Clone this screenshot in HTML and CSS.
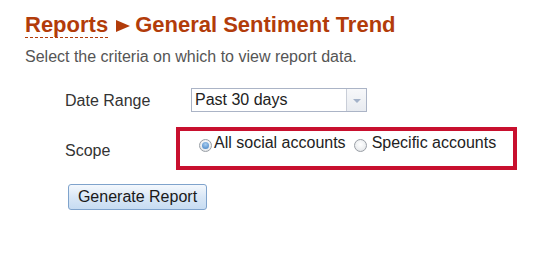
FILE: index.html
```html
<!DOCTYPE html>
<html>
<head>
<meta charset="utf-8">
<link rel="stylesheet" href="styles.css">
</head>
<body>
<div class="page">
  <h1 class="title"><span class="crumb">Reports</span><svg class="sep" width="14" height="12" viewBox="0 0 14 12" aria-hidden="true"><polygon points="0,0 14,6 0,12" fill="#b23c0a"/></svg>General Sentiment Trend</h1>
  <p class="intro">Select the criteria on which to view report data.</p>
  <div class="form">
    <div class="row row-date">
      <div class="label">Date Range</div>
      <div class="select">
        <span class="select-value">Past 30 days</span>
        <span class="select-btn"><span class="arrow"></span></span>
      </div>
    </div>
    <div class="row row-scope">
      <div class="label label-scope">Scope</div>
      <div class="highlight">
        <span class="radio checked"></span><span class="opt opt-first">All social accounts</span>
        <span class="radio radio-second"></span><span class="opt">Specific accounts</span>
      </div>
    </div>
    <div class="row row-btn">
      <button class="btn">Generate Report</button>
    </div>
  </div>
</div>
</body>
</html>
```

FILE: styles.css
```css
html, body {
  margin: 0;
  padding: 0;
  background: #ffffff;
}
body {
  font-family: "Liberation Sans", Arial, sans-serif;
  font-size: 16px;
  color: #333333;
}
.page {
  padding-left: 25px;
  padding-top: 12px;
}
.title {
  margin: 0;
  font-size: 22px;
  line-height: 26px;
  font-weight: bold;
  color: #b23c0a;
}
.crumb {
  border-bottom: 1px dashed #b23c0a;
}
.sep {
  margin-left: 8px;
  margin-right: 5px;
  vertical-align: 0px;
}
.intro {
  margin: 10px 0 0 0;
  line-height: 18px;
  color: #555555;
}
.form {
  margin-left: 40px;
  margin-top: 22px;
}
.row {
  display: flex;
  align-items: flex-start;
}
.label {
  width: 126px;
  line-height: 18px;
  padding-top: 4px;
  color: #333333;
}
.label-scope {
  padding-top: 15px;
}
.select {
  width: 174px;
  height: 22px;
  border: 1px solid #abb4c6;
  display: flex;
  background: #fff;
}
.select-value {
  flex: 1;
  padding-left: 3px;
  line-height: 22px;
  color: #222222;
}
.select-btn {
  width: 19px;
  border-left: 1px solid #c9ced8;
  background: linear-gradient(#f7f8fa, #e8ebf0);
  display: flex;
  align-items: center;
  justify-content: center;
}
.arrow {
  width: 0;
  height: 0;
  border-left: 4px solid transparent;
  border-right: 4px solid transparent;
  border-top: 4px solid #a3b2c9;
  margin-top: 1px;
}
.row-scope {
  margin-top: 15px;
}
.highlight {
  margin-left: -15px;
  width: 333px;
  height: 35px;
  border: 4px solid #c8102e;
  display: flex;
  align-items: flex-start;
}
.radio {
  width: 11px;
  height: 11px;
  border-radius: 50%;
  border: 1px solid #9a9fa6;
  background: radial-gradient(circle at 50% 40%, #ffffff 0%, #eceef0 60%, #d6d9dd 100%);
  margin-top: 8px;
  margin-left: 19px;
  position: relative;
  flex: none;
}
.radio.checked::after {
  content: "";
  position: absolute;
  left: 2px;
  top: 2px;
  width: 7px;
  height: 7px;
  border-radius: 50%;
  background: radial-gradient(circle at 50% 35%, #a9cdef 0%, #5d95cf 70%, #3f78b8 100%);
}
.radio-second {
  margin-left: 8px;
}
.opt {
  line-height: 18px;
  padding-top: 3px;
  color: #222222;
  margin-left: 5px;
  white-space: nowrap;
}
.opt-first {
  margin-left: 2px;
}
.row-btn {
  margin-top: 14px;
  padding-left: 3px;
}
.btn {
  font-family: "Liberation Sans", Arial, sans-serif;
  font-size: 16px;
  color: #1a1a1a;
  width: 139px;
  height: 26px;
  padding: 0;
  border: 1px solid #7fa3cc;
  border-radius: 3px;
  background: linear-gradient(#f4f8fd, #d9e7f6 50%, #c7dcf2);
  line-height: 22px;
}
```
